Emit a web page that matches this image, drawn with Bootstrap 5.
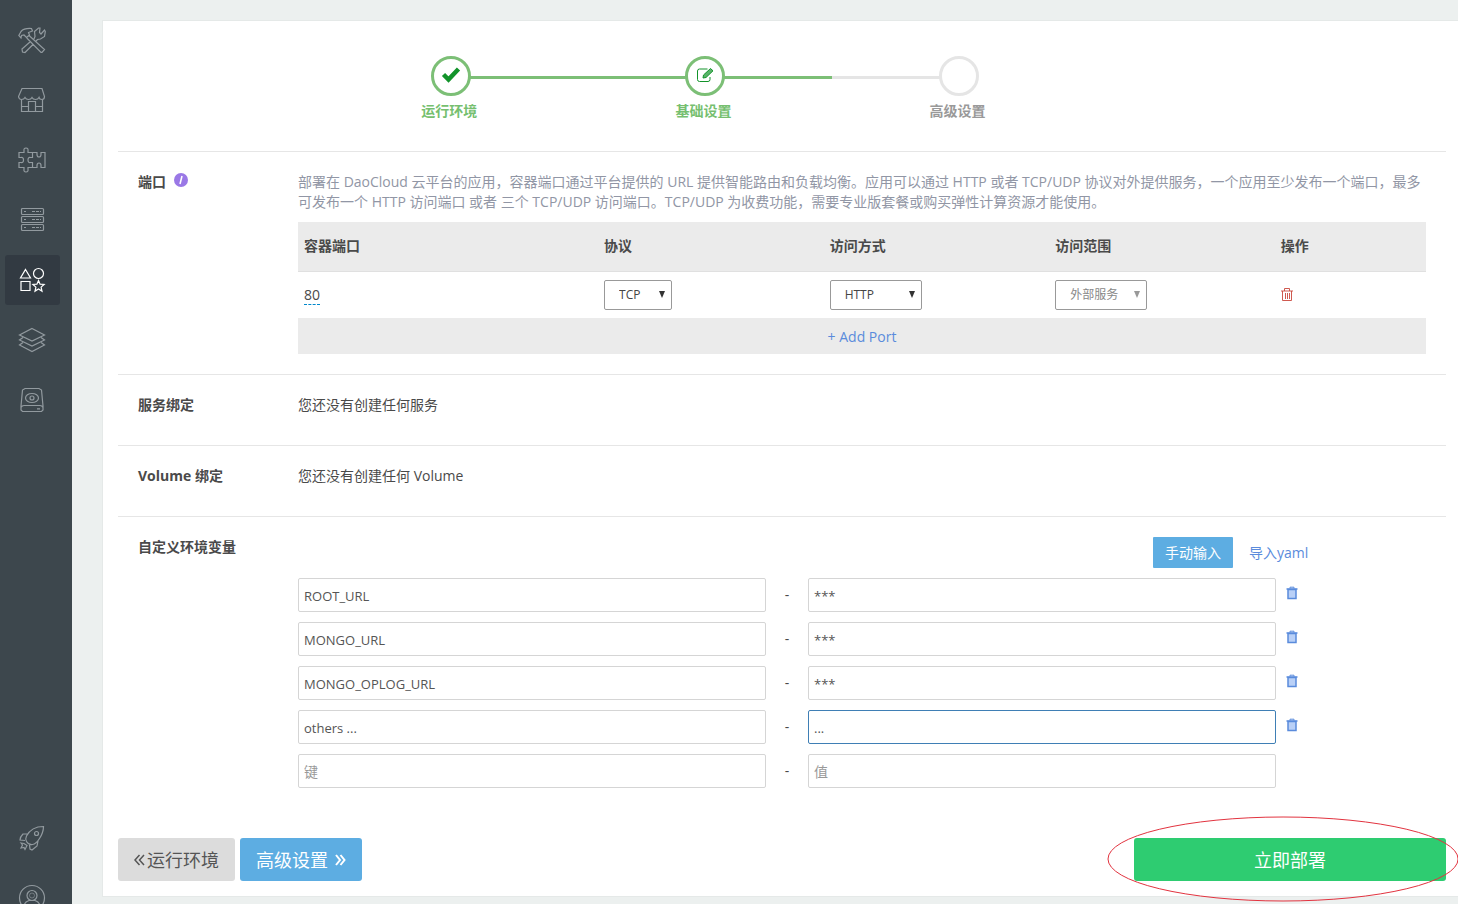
<!DOCTYPE html>
<html lang="zh-CN">
<head>
<meta charset="utf-8">
<meta name="viewport" content="width=device-width, initial-scale=1">
<title>DaoCloud 基础设置</title>
<link href="https://cdn.jsdelivr.net/npm/bootstrap@5.3.0/dist/css/bootstrap.min.css" rel="stylesheet">
<style>
  body { font-family: "Open Sans", "Noto Sans CJK SC", sans-serif; font-size: 14px; line-height: 20px; color: #4a4a4a; background: #ecf0ef; }
  a { color: #5a8bdc; text-decoration: none; }
  svg { display: block; fill: none; stroke: currentColor; }

  /* sidebar */
  .side { width: 72px; height: 100vh; background: #3d474d; padding: 15px 12px 0 5px; overflow: hidden; }
  .side a { display: flex; flex: none; align-items: center; justify-content: center; width: 55px; height: 50px; padding-right: 2px; margin-bottom: 10px; border-radius: 3px; color: #929a9f; }
  .side a.current { background: #323a42; color: #fff; }
  .side .to-end { margin-top: auto; }
  .side .tail { margin-bottom: -19px; }
  .side svg { width: 28px; height: 28px; stroke-width: 1.2; }

  /* panel */
  .page-body { min-width: 0; padding: 21px 0 8px 31px; }
  .panel { background: #fff; padding: 35px 12px 15px 15px; box-shadow: 0 0 0 1px #e5e9e8; }

  /* wizard steps */
  .steps { display: grid; grid-template-columns: repeat(3, 1fr); width: 57.4%; margin: 0 0 30px 15.5%; }
  .step { position: relative; display: flex; flex-direction: column; align-items: center; gap: 5px; font-weight: 700; color: #999; }
  .step::before, .step::after { content: ""; position: absolute; top: 20px; height: 3px; width: 50%; }
  .step::before { left: 0; }
  .step::after { right: 0; }
  .step .dot { z-index: 1; display: flex; align-items: center; justify-content: center; width: 40px; height: 40px; border: 3px solid #e5e5e5; border-radius: 50%; background: #fff; color: #12932a; }
  .step .caption { padding-right: 3px; }
  .step.reached { color: #76bf6f; }
  .step.reached .dot { border-color: #7cbf76; }
  .step.reached::after, .step.reached + .step.reached::before { background: #7cbf76; }
  .step.waiting::before { background: #e5e5e5; }

  /* form sections */
  .section { display: flex; border-top: 1px solid #e6e6e6; padding: 20px 20px 30px; }
  .section .title { flex: none; width: 160px; font-weight: 700; margin: 0; font-size: 14px; line-height: 20px; }
  .section .body { flex: 1; min-width: 0; }
  .port-section { padding-bottom: 20px; }
  .hint { color: #9196a5; margin-bottom: 10px; }

  .ports { width: 100%; table-layout: fixed; }
  .ports th { height: 49px; padding: 0 6px; background: #ebebeb; border-bottom: 1px solid #e0e0e0; }
  .ports td { height: 47px; padding: 0 6px; }
  .ports tfoot td { height: 36px; padding-top: 2px; background: #ebebeb; text-align: center; }
  .ports button, .env .pair button { display: block; border: 0; padding: 0; background: none; }
  .ports button { color: #c9473c; }
  .editable { color: #4a4a4a; border-bottom: 1px dashed #0088cc; }
  .pick { position: relative; display: block; }
  .pick select { appearance: none; width: 100%; height: 30px; padding: 1px 14px 0; border: 1px solid #999; border-radius: 2px; background: #fff; font-size: 12px; color: #444; opacity: 1; }
  .pick::after { content: ""; position: absolute; right: 7px; top: 11px; border: solid transparent; border-width: 7px 3px 0; border-top-color: #333; }
  .pick.off select { color: #888; }
  .pick.off::after { border-top-color: #999; }
  .narrow { width: 68px; }
  .wide { width: 92px; }

  .env .tabs-line { display: flex; gap: 16px; align-items: center; padding-left: 75.8%; margin-bottom: 10px; }
  .manual { flex: none; border: 0; background: #5dade2; color: #fff; border-radius: 1px; width: 80px; height: 31px; font-size: 14px; }
  .env .pair { display: grid; grid-template-columns: 468fr 42px 468fr 150px; align-items: center; margin-bottom: 10px; text-align: center; }
  .env .form-control { height: 34px; padding: 2px 5px 0; border: 1px solid #d5d5d5; border-radius: 2px; font-size: 13px; color: #555; }
  .env .form-control::placeholder { color: #999; font-size: 14px; }
  .env .form-control.active-field { border-color: #3f7fb5; }
  .env .pair button { color: #5a8bdc; margin: 0 0 5px 10px; justify-self: start; }

  /* footer buttons */
  .actions { display: flex; gap: 5px; margin-top: 10px; }
  .actions .btn { display: flex; align-items: center; justify-content: center; height: 43px; padding: 0 16px; border: 0; border-radius: 3px; font-size: 18px; line-height: 24px; }
  .actions .prev-step { background: #dcdcdc; color: #555; gap: 2px; }
  .actions .next-step { background: #5dade2; color: #fff; gap: 7px; }
  .actions .deploy-now { background: #2ecc71; color: #fff; }
  .deploy-box { position: relative; width: 23.5%; margin-left: auto; }
  .deploy-box svg { position: absolute; left: -26px; top: -21px; width: calc(100% + 38px); height: 84px; color: #e2333f; pointer-events: none; overflow: visible; }
</style>
<script src="https://cdn.jsdelivr.net/npm/bootstrap@5.3.0/dist/js/bootstrap.bundle.min.js" defer></script>
</head>
<body>
<svg width="0" height="0" class="position-absolute" aria-hidden="true">
  <symbol id="bin" viewBox="0 0 12 14"><path d="M2 3.500h8v9H2z" fill="#b9d0f7" stroke-width="1.500"/><path d="M.5 3h11" stroke-width="1.500"/><path d="M4 2.500V1.200h4v1.300"/></symbol>
</svg>
<div class="d-flex">
  <nav class="side d-flex flex-column flex-shrink-0 sticky-top" aria-label="主导航">
    <a href="#" aria-label="工具"><svg viewBox="0 0 28 28"><path d="M.8 9.500 3 5.500Q6 2 13.500 2.500l1 2.500-4 1.500 1 2.500-3 2.500-2.500-2.500-2.500.5L3 12zM11 9.500 26.500 23.500l-2.500 2.800h-1L8.800 12M12.500 15.500 4 23l.5 3 2.500.5 8.500-8.500M16 13l1-2.500-.5-5 4-3.500h1.500l-.5 4.500L23 8l3.500-4 .8 1.500-.8 5-4 2.500-3 .5-1.500 1.500"/></svg></a>
    <a href="#" aria-label="商店"><svg viewBox="0 0 28 28"><path d="M4 2.500h20l2.500 8q0 3-2.500 3t-3-2q-1 2-3.500 2t-3.500-2q-1 2-3.500 2t-3.500-2q-1 2-3.500 2t-3-3zM3.500 14v11.500h21V14M10.500 25V15.500h7V25M4 20.500h6.500M17.500 20.500h7"/></svg></a>
    <a href="#" aria-label="插件"><svg viewBox="0 0 28 28"><path d="M1 6.500h5V5q-.5-3 2-3t2 3v1.500h4.500v5h-2q-2.500-.5-2.500 2.500t2.500 2.500h2v5H10V23q.5 3-2 3t-2-3v-1.500H1v-5h2q2.500.5 2.500-2.500T3 11.500H1zM14.500 6.500H19v2q0 2.500 2 2.500t2-2.500v-2h4v15h-4v-2q0-2.500-2-2.500t-2 2.500v2h-4.500"/></svg></a>
    <a href="#" aria-label="主机"><svg viewBox="0 0 28 28"><rect x="3.500" y="2.500" width="22" height="6" rx="1"/><rect x="3.500" y="10.500" width="22" height="6" rx="1"/><rect x="3.500" y="18.500" width="22" height="6" rx="1"/><path d="M6 5.500h2M6 13.500h2M6 21.500h2M14 5.500h9M14 13.500h9M14 21.500h9" stroke-dasharray="3 1"/></svg></a>
    <a href="#" class="current" aria-current="page" aria-label="应用"><svg viewBox="0 0 28 28"><path d="M7.500 3.500 12.500 12h-10zM3 15.500h9v9H3zM20.500 14.500l1.600 3.700 4 .3-3 2.600.9 4-3.500-2.200-3.500 2.200.9-4-3-2.600 4-.3z"/><circle cx="20.500" cy="7.500" r="5"/></svg></a>
    <a href="#" aria-label="镜像"><svg viewBox="0 0 28 28"><path d="M14 2.500 26.500 9 14 15 1.500 9zM5 11.500l-3.500 2.500L14 20l12.500-6-3.500-2.500M5 16.500 1.500 19 14 25.500 26.500 19 23 16.500"/></svg></a>
    <a href="#" aria-label="存储"><svg viewBox="0 0 28 28"><path d="M7 2.500h14l2.500 1.500 1.500 16v4l-1.500 1.500h-19L3 24v-4L4.500 4zM3 21.500q1-2 3-2h16q2 0 3 2M19 22.800h3"/><ellipse cx="14" cy="12" rx="6.500" ry="4.500"/><circle cx="14" cy="12" r="2"/></svg></a>
    <a href="#" class="to-end" aria-label="快速开始"><svg viewBox="0 0 28 28"><path d="M25.500 2.500q-12 0-17 9.500-1.500 3 0 5.500 2 3.500 6 3 3.500-.5 7-6 4-6 4-12zM10 10H5q-3 3-3 6l5 .5M20 17l-1 5-5 4-2-1-.5-4M3 19l1.500 2L3 24l3-.5 1 2 2-4-3-2z"/><circle cx="18.500" cy="9.500" r="2"/></svg></a>
    <a href="#" class="tail" aria-label="账户"><svg viewBox="0 0 28 28"><circle cx="14" cy="14" r="12.500"/><circle cx="14" cy="11.500" r="5"/><circle cx="14" cy="11.500" r="2.500" stroke-width=".6"/><path d="M6 23q0-5 5-6.500h6q5 1.500 5 6.500"/></svg></a>
  </nav>

  <main class="page-body flex-grow-1">
    <form class="panel">
      <div class="steps">
        <div class="step reached"><span class="dot"><svg width="20" height="18" viewBox="0 0 20 18"><path d="m2.500 7.500 5 5L17.500 2" stroke-width="4.500"/></svg></span><span class="caption">运行环境</span></div>
        <div class="step reached"><span class="dot"><svg width="18" height="18" viewBox="0 0 18 18"><path d="M11.500 2H3.500Q1.500 2 1.500 4v8.500q0 2 2 2H12q2 0 2-2V10"/><path d="m7 11 .5-3L14.500 1.500l2.500 2.300L10 10.500z" fill="currentColor" fill-opacity=".7"/></svg></span><span class="caption">基础设置</span></div>
        <div class="step waiting"><span class="dot"></span><span class="caption">高级设置</span></div>
      </div>

      <section class="section port-section">
        <h2 class="title d-flex gap-2">端口 <svg width="14" height="16" viewBox="0 0 14 16" role="img" aria-label="说明"><circle cx="7" cy="8" r="7" fill="#9a78e6" stroke="none"/><path d="m8 4-2 8" stroke="#fff" stroke-width="1.500"/></svg></h2>
        <div class="body">
          <p class="hint">部署在 DaoCloud 云平台的应用，容器端口通过平台提供的 URL 提供智能路由和负载均衡。应用可以通过 HTTP 或者 TCP/UDP 协议对外提供服务，一个应用至少发布一个端口，最多可发布一个 HTTP 访问端口 或者 三个 TCP/UDP 访问端口。TCP/UDP 为收费功能，需要专业版套餐或购买弹性计算资源才能使用。</p>
          <table class="ports">
            <colgroup><col style="width:26.6%"><col style="width:20%"><col style="width:20%"><col style="width:20%"><col></colgroup>
            <thead><tr><th>容器端口</th><th>协议</th><th>访问方式</th><th>访问范围</th><th>操作</th></tr></thead>
            <tbody><tr>
              <td><a href="#" class="editable">80</a></td>
              <td><span class="pick narrow"><select aria-label="协议"><option>TCP</option><option>UDP</option></select></span></td>
              <td><span class="pick wide"><select aria-label="访问方式"><option>HTTP</option><option>TCP</option></select></span></td>
              <td><span class="pick wide off"><select aria-label="访问范围" disabled><option>外部服务</option></select></span></td>
              <td><button type="button" aria-label="删除端口"><svg width="12" height="13" viewBox="0 0 12 13"><path d="M0 3h12M1.500 3v9.500h9V3M3.500 3V.5h5V3M4.500 5v6M6.500 5v6M8.500 5v6" stroke-width=".9"/></svg></button></td>
            </tr></tbody>
            <tfoot><tr><td colspan="5"><a href="#">+ Add Port</a></td></tr></tfoot>
          </table>
        </div>
      </section>

      <section class="section"><h2 class="title">服务绑定</h2><div class="body">您还没有创建任何服务</div></section>
      <section class="section"><h2 class="title">Volume 绑定</h2><div class="body">您还没有创建任何 Volume</div></section>

      <section class="section env">
        <h2 class="title">自定义环境变量</h2>
        <div class="body">
          <div class="tabs-line"><button type="button" class="manual">手动输入</button><a href="#" class="text-nowrap">导入yaml</a></div>
          <div class="pair"><input class="form-control" aria-label="键 1" value="ROOT_URL"><span>-</span><input class="form-control" aria-label="值 1" value="***"><button type="button" aria-label="删除"><svg width="12" height="14"><use href="#bin"/></svg></button></div>
          <div class="pair"><input class="form-control" aria-label="键 2" value="MONGO_URL"><span>-</span><input class="form-control" aria-label="值 2" value="***"><button type="button" aria-label="删除"><svg width="12" height="14"><use href="#bin"/></svg></button></div>
          <div class="pair"><input class="form-control" aria-label="键 3" value="MONGO_OPLOG_URL"><span>-</span><input class="form-control" aria-label="值 3" value="***"><button type="button" aria-label="删除"><svg width="12" height="14"><use href="#bin"/></svg></button></div>
          <div class="pair"><input class="form-control" aria-label="键 4" value="others ..."><span>-</span><input class="form-control active-field" aria-label="值 4" value="..."><button type="button" aria-label="删除"><svg width="12" height="14"><use href="#bin"/></svg></button></div>
          <div class="pair"><input class="form-control" aria-label="键 5" placeholder="键"><span>-</span><input class="form-control" aria-label="值 5" placeholder="值"></div>
        </div>
      </section>

      <div class="actions">
        <button type="button" class="btn prev-step"><svg width="11" height="12" viewBox="0 0 11 12" stroke-width="1.500"><path d="M5.500 1 1 6l4.500 5M10 1 5.500 6l4.500 5"/></svg>运行环境</button>
        <button type="button" class="btn next-step">高级设置<svg width="11" height="12" viewBox="0 0 11 12" stroke-width="2"><path d="m1 1 4 5-4 5M5.500 1l4 5-4 5"/></svg></button>
        <div class="deploy-box">
          <button type="submit" class="btn deploy-now w-100">立即部署</button>
          <svg aria-hidden="true"><ellipse cx="50%" cy="50%" rx="50%" ry="42"/></svg>
        </div>
      </div>
    </form>
  </main>
</div>
</body>
</html>
